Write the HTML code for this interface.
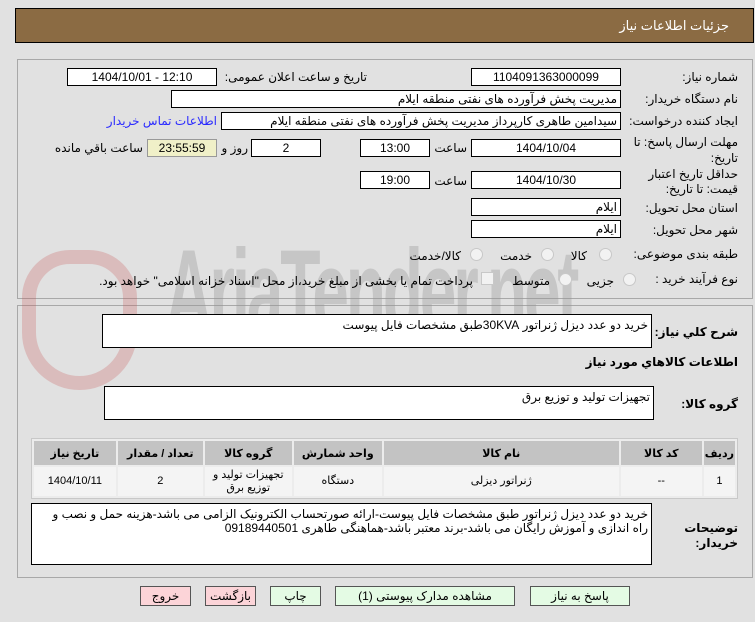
<!DOCTYPE html>
<html><head><meta charset="utf-8"><style>
body{margin:0;width:755px;height:622px;background:#e1e1e1;font-family:"Liberation Sans","DejaVu Sans",sans-serif;font-size:12px;color:#000;position:relative;overflow:hidden}
.a{position:absolute}
.hd{left:15px;top:8px;width:737px;height:33px;background:#8b6b43;border:1px solid #000}
.hd span{position:absolute;right:24px;top:9px;color:#fff;font-size:13px}
.pn{border:1px solid #a8a8a8;background:#e1e1e1}
.in{position:absolute;background:#fff;border:1px solid #000;line-height:16px;text-align:center;font-size:12px;box-sizing:border-box;height:18px}
.r{text-align:right;padding-right:3px}
.l{position:absolute;direction:rtl;white-space:nowrap;font-size:12px}
.rad{position:absolute;width:11px;height:11px;border-radius:50%;border:1px solid #c8c8c8;background:#f2f2f2}
.ta{position:absolute;background:#fff;border:1px solid #000;direction:rtl;font-size:12px;padding:3px 3px;box-sizing:border-box}
table{border-collapse:separate;border-spacing:2px;position:absolute;left:31px;top:438px;width:707px;background:#ececec;border:1px solid #c8c8c8}
th{background:#c3c3c3;height:22px;font-size:11px;font-weight:bold}
td{background:#f4f4f4;height:27px;text-align:center;font-size:11px;line-height:13px}
.b{position:absolute;top:586px;height:18px;border:1px solid #555;font-size:12px;text-align:center;line-height:18px;background:#e4fbe4}
.pk{background:#fcd4d8}
.wm{position:absolute;left:165px;top:232px;font-size:120px;line-height:120px;font-weight:bold;color:rgba(150,150,150,0.35);letter-spacing:-6px;transform:scaleX(0.55);transform-origin:left}
</style></head><body>
<div class="a hd"><span>جزئیات اطلاعات نیاز</span></div>
<div class="a pn" style="left:17px;top:59px;width:734px;height:238px"></div>
<div class="a pn" style="left:17px;top:305px;width:734px;height:271px"></div>
<div class="wm">AriaTender.net</div>
<div class="a" style="left:22px;top:250px;width:115px;height:140px;border:14px solid rgba(200,80,80,0.25);border-radius:50px 50px 60px 60px;box-sizing:border-box"></div>

<div class="l" style="right:17px;top:70px">شماره نیاز:</div>
<div class="in" style="left:471px;top:68px;width:150px">1104091363000099</div>
<div class="l" style="right:388px;top:70px">تاریخ و ساعت اعلان عمومی:</div>
<div class="in" style="left:67px;top:68px;width:150px">1404/10/01 - 12:10</div>

<div class="l" style="right:17px;top:92px">نام دستگاه خریدار:</div>
<div class="in r" style="left:171px;top:90px;width:450px;direction:rtl">مدیریت پخش فرآورده های نفتی منطقه ایلام</div>

<div class="l" style="right:17px;top:114px">ایجاد کننده درخواست:</div>
<div class="in r" style="left:221px;top:112px;width:400px;direction:rtl">سیدامین طاهری کارپرداز مدیریت پخش فرآورده های نفتی منطقه ایلام</div>
<div class="l" style="right:538px;top:114px;color:#2a2aff">اطلاعات تماس خریدار</div>

<div class="l" style="right:17px;top:135px">مهلت ارسال پاسخ: تا</div>
<div class="l" style="right:17px;top:151px">تاریخ:</div>
<div class="in" style="left:471px;top:139px;width:150px">1404/10/04</div>
<div class="l" style="right:288px;top:141px">ساعت</div>
<div class="in" style="left:360px;top:139px;width:70px">13:00</div>
<div class="in" style="left:251px;top:139px;width:70px">2</div>
<div class="l" style="right:507px;top:141px">روز و</div>
<div class="in" style="left:147px;top:139px;width:70px;background:#f0f0c8;border-color:#999">23:55:59</div>
<div class="l" style="right:612px;top:141px">ساعت باقي مانده</div>

<div class="l" style="right:17px;top:167px">حداقل تاریخ اعتبار</div>
<div class="l" style="right:17px;top:182px">قیمت: تا تاریخ:</div>
<div class="in" style="left:471px;top:171px;width:150px">1404/10/30</div>
<div class="l" style="right:288px;top:174px">ساعت</div>
<div class="in" style="left:360px;top:171px;width:70px">19:00</div>

<div class="l" style="right:17px;top:201px">استان محل تحویل:</div>
<div class="in r" style="left:471px;top:198px;width:150px">ایلام</div>
<div class="l" style="right:17px;top:223px">شهر محل تحویل:</div>
<div class="in r" style="left:471px;top:220px;width:150px">ایلام</div>

<div class="l" style="right:17px;top:247px">طبقه بندی موضوعی:</div>
<div class="rad" style="left:599px;top:248px"></div><div class="l" style="right:168px;top:249px">کالا</div>
<div class="rad" style="left:541px;top:248px"></div><div class="l" style="right:223px;top:249px">خدمت</div>
<div class="rad" style="left:470px;top:248px"></div><div class="l" style="right:294px;top:249px">کالا/خدمت</div>

<div class="l" style="right:17px;top:272px">نوع فرآیند خرید :</div>
<div class="rad" style="left:623px;top:273px"></div><div class="l" style="right:141px;top:274px">جزیی</div>
<div class="rad" style="left:559px;top:273px"></div><div class="l" style="right:205px;top:274px">متوسط</div>
<div class="a" style="left:481px;top:272px;width:11px;height:11px;border:1px solid #c8c8c8;background:#f2f2f2"></div>
<div class="l" style="right:282px;top:274px">پرداخت تمام یا بخشی از مبلغ خرید،از محل "اسناد خزانه اسلامی" خواهد بود.</div>

<div class="l" style="right:17px;top:325px;font-weight:bold">شرح کلي نیاز:</div>
<div class="ta" style="left:102px;top:314px;width:550px;height:34px">خرید دو عدد دیزل ژنراتور 30KVAطبق مشخصات فایل پیوست</div>
<div class="l" style="right:17px;top:355px;font-weight:bold">اطلاعات کالاهاي مورد نیاز</div>
<div class="l" style="right:17px;top:397px;font-weight:bold">گروه کالا:</div>
<div class="ta" style="left:104px;top:386px;width:550px;height:34px">تجهیزات تولید و توزیع برق</div>

<table dir="rtl"><tr><th style="width:26px">ردیف</th><th style="width:79px">کد کالا</th><th style="width:233px">نام کالا</th><th style="width:86px">واحد شمارش</th><th style="width:85px">گروه کالا</th><th style="width:83px">تعداد / مقدار</th><th>تاریخ نیاز</th></tr>
<tr><td>1</td><td>--</td><td>ژنراتور دیزلی</td><td>دستگاه</td><td>تجهیزات تولید و<br>توزیع برق</td><td>2</td><td>1404/10/11</td></tr></table>

<div class="l" style="right:17px;top:521px;font-weight:bold">توضیحات</div>
<div class="l" style="right:17px;top:536px;font-weight:bold">خریدار:</div>
<div class="ta" style="left:31px;top:503px;width:621px;height:62px;line-height:14px">خرید دو عدد دیزل ژنراتور طبق مشخصات فایل پیوست-ارائه صورتحساب الکترونیک الزامی می باشد-هزینه حمل  و نصب و راه اندازی و آموزش  رایگان می باشد-برند معتبر باشد-هماهنگی طاهری 09189440501</div>

<div class="b" style="left:530px;width:98px">پاسخ به نیاز</div>
<div class="b" style="left:335px;width:178px">مشاهده مدارک پیوستی (1)</div>
<div class="b" style="left:270px;width:49px">چاپ</div>
<div class="b pk" style="left:205px;width:49px">بازگشت</div>
<div class="b pk" style="left:140px;width:49px">خروج</div>
</body></html>
